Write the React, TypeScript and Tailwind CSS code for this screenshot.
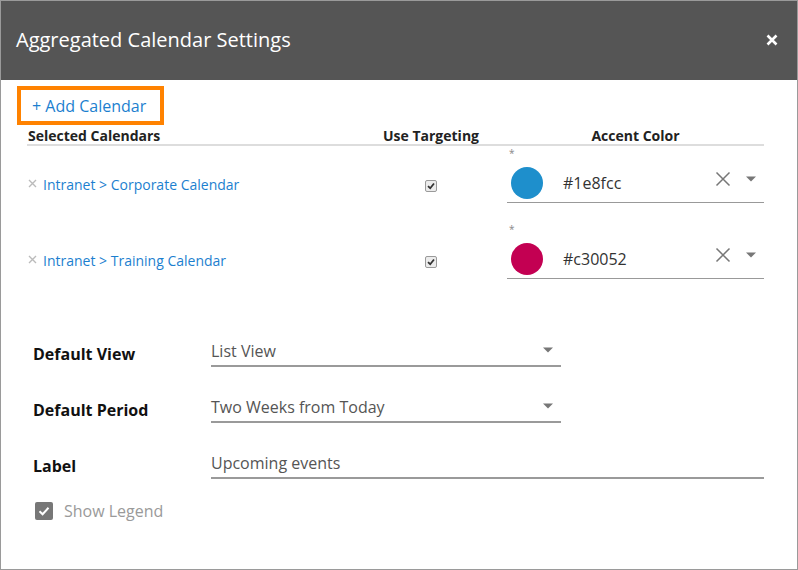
import React from "react";

interface CalendarRow {
  name: string;
  color: string;
}

const rows: CalendarRow[] = [
  { name: "Intranet > Corporate Calendar", color: "#1e8fcc" },
  { name: "Intranet > Training Calendar", color: "#c30052" },
];

const Caret = () => (
  <svg width="10" height="6" viewBox="0 0 10 6">
    <path d="M0 0.5 L10 0.5 L5 5.5 Z" fill="#777" />
  </svg>
);

const SmallCheck = () => (
  <div className="w-[12px] h-[12px] rounded-[2px] border border-[#9a9a9a] bg-[#ececec] flex items-center justify-center">
    <svg width="8" height="8" viewBox="0 0 8 8">
      <path d="M1 4.2 L3.2 6.2 L7 1.5" stroke="#333" strokeWidth="1.8" fill="none" />
    </svg>
  </div>
);

const App: React.FC = () => {
  return (
    <div
      className="w-[798px] h-[570px] border border-[#9a9a9a] bg-white overflow-hidden"
      style={{ fontFamily: '"Open Sans", "Noto Sans", sans-serif' }}
    >
      <div className="h-[79px] bg-[#555555] flex items-center justify-between pl-[15px] pr-[19px]">
        <p className="text-white text-[20px] leading-none -mt-[2px]">Aggregated Calendar Settings</p>
        <svg width="12" height="12" viewBox="0 0 12 12" className="-mt-[2px]">
          <path d="M1.5 1.5 L10.5 10.5 M10.5 1.5 L1.5 10.5" stroke="#fff" strokeWidth="2.6" />
        </svg>
      </div>

      <div className="pl-[16px] pt-[6px]">
        <button className="w-[147px] h-[39px] border-[4px] border-[#ff8200] text-[#1c7fcf] text-[16px] flex items-center pl-[11px]">
          + Add Calendar
        </button>
      </div>

      <div className="ml-[26px] w-[737px]">
        <div className="flex h-[21px] items-end pb-[1px] border-b-2 border-[#dddddd] text-[14px] leading-none font-bold text-[#222]">
          <div className="w-[328px] pl-[1px]">Selected Calendars</div>
          <div className="w-[152px] text-center">Use Targeting</div>
          <div className="flex-1 text-center">Accent Color</div>
        </div>

        <div className="flex flex-col gap-[19px]">
          {rows.map((row) => (
            <div key={row.name} className="flex">
              <div className="w-[328px] flex flex-col">
                <div className="h-[19px]" />
                <div className="h-[37px] flex items-center gap-[6px] pl-[1px] pt-[1px]">
                  <svg width="9" height="9" viewBox="0 0 9 9" className="-mt-[2px]">
                    <path d="M1 1 L8 8 M8 1 L1 8" stroke="#bbbbbb" strokeWidth="1.4" />
                  </svg>
                  <span className="text-[14px] text-[#1c7fcf]">{row.name}</span>
                </div>
              </div>
              <div className="w-[152px] flex flex-col">
                <div className="h-[19px]" />
                <div className="h-[37px] flex items-center justify-center pt-[5px]">
                  <SmallCheck />
                </div>
              </div>
              <div className="flex-1 flex flex-col">
                <div className="h-[19px] text-[10px] text-[#888] pl-[2px] pt-[2px] leading-none">*</div>
                <div className="h-[38px] flex items-center border-b border-[#999] pb-[1px]">
                  <div className="w-[32px] h-[32px] rounded-full ml-[4px]" style={{ backgroundColor: row.color }} />
                  <span className="ml-[20px] text-[16px] text-[#333] flex-1">{row.color}</span>
                  <svg width="16" height="16" viewBox="0 0 16 16" className="-mt-[8px]">
                    <path d="M1.5 1.5 L14.5 14.5 M14.5 1.5 L1.5 14.5" stroke="#777" strokeWidth="1.5" />
                  </svg>
                  <div className="ml-[15px] mr-[8px] -mt-[8px]">
                    <Caret />
                  </div>
                </div>
              </div>
            </div>
          ))}
        </div>
      </div>

      <div className="pl-[32px] mt-[56px] flex flex-col gap-[24px]">
        {[
          { label: "Default View", value: "List View", select: true },
          { label: "Default Period", value: "Two Weeks from Today", select: true },
          { label: "Label", value: "Upcoming events", select: false },
        ].map((f) => (
          <div key={f.label} className="flex items-center h-[32px]">
            <div className="w-[178px] text-[16px] font-bold text-[#111] pt-[6px]">{f.label}</div>
            <div
              className={
                f.select
                  ? "w-[350px] h-[32px] border-b-2 border-[#9a9a9a] flex items-center justify-between pr-[8px] pt-[1px]"
                  : "w-[553px] h-[32px] border-b-2 border-[#9a9a9a] flex items-center pt-[1px]"
              }
            >
              <span className="text-[16px] text-[#555]">{f.value}</span>
              {f.select && (
                <div className="-mt-[1px]">
                  <Caret />
                </div>
              )}
            </div>
          </div>
        ))}
      </div>

      <div className="pl-[34px] mt-[20px] flex items-center gap-[11px]">
        <div className="w-[18px] h-[18px] rounded-[2px] bg-[#777] flex items-center justify-center">
          <svg width="12" height="12" viewBox="0 0 12 12">
            <path d="M1.5 6.2 L4.6 9.2 L10.5 2.8" stroke="#fff" strokeWidth="2" fill="none" />
          </svg>
        </div>
        <span className="text-[16px] text-[#9a9a9a]">Show Legend</span>
      </div>
    </div>
  );
};

export default App;
